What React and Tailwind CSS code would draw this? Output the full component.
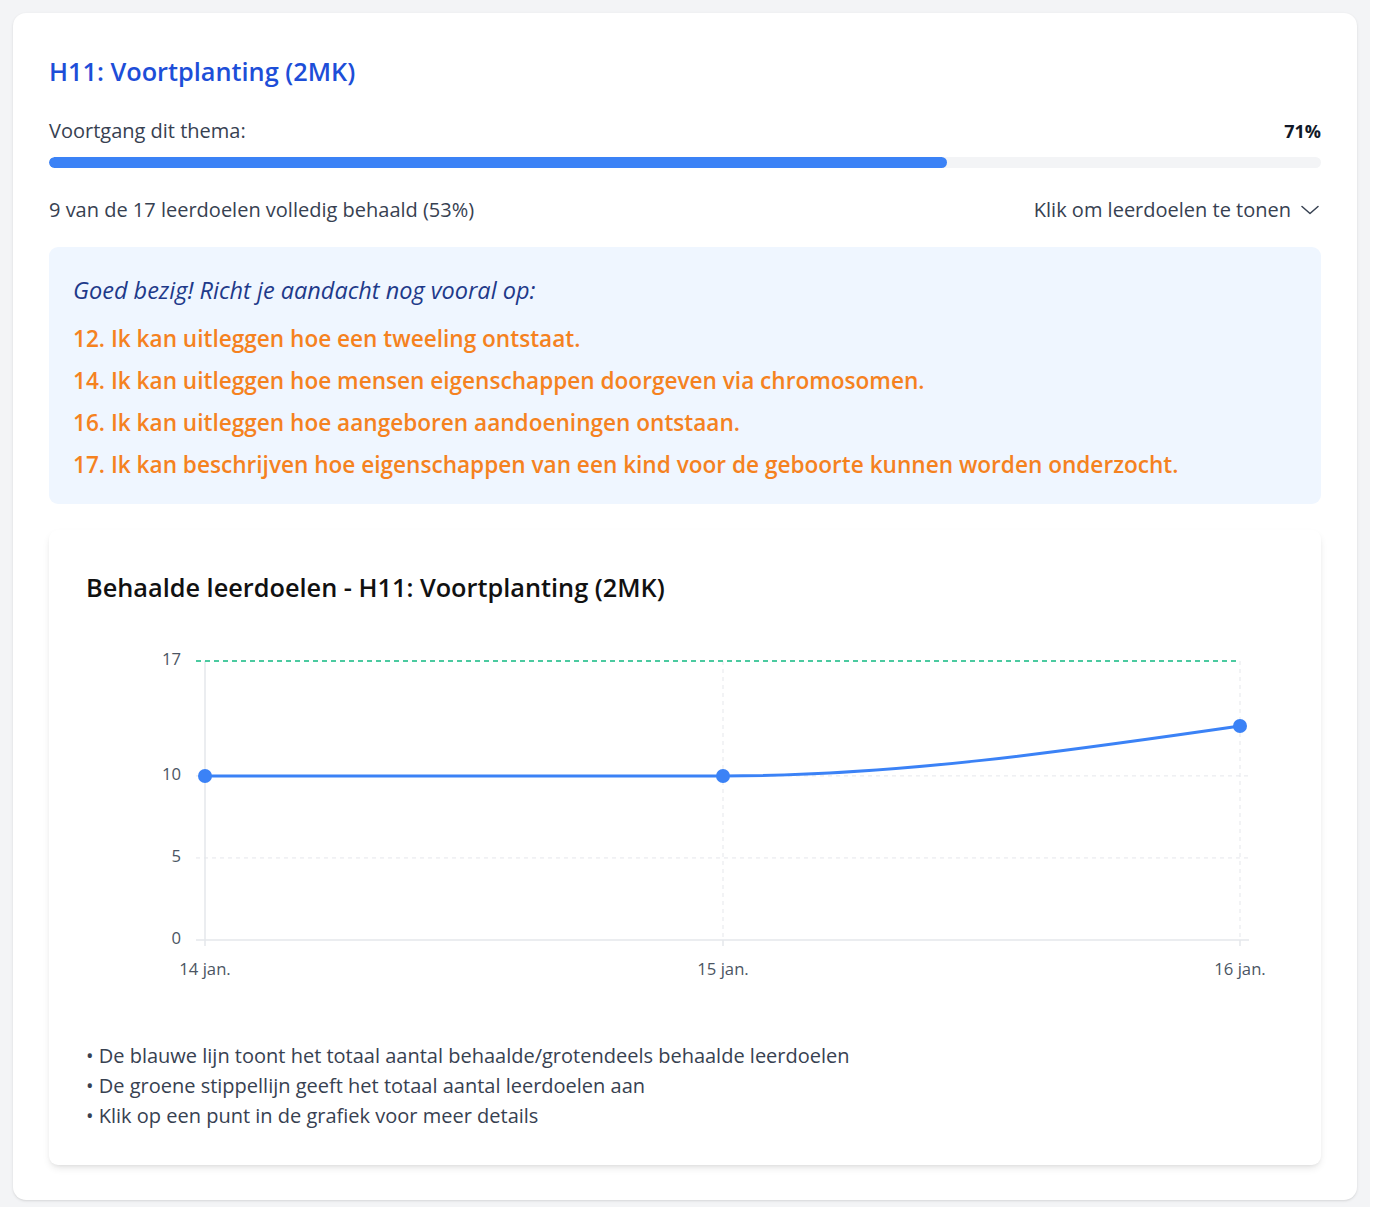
import React from "react";

const items = [
  "12. Ik kan uitleggen hoe een tweeling ontstaat.",
  "14. Ik kan uitleggen hoe mensen eigenschappen doorgeven via chromosomen.",
  "16. Ik kan uitleggen hoe aangeboren aandoeningen ontstaan.",
  "17. Ik kan beschrijven hoe eigenschappen van een kind voor de geboorte kunnen worden onderzocht.",
];

function Chart() {
  const yv = (v) => 295 - v * 16.41;
  const xs = [119, 637, 1154];
  return (
    <svg width="1198" height="350" viewBox="0 0 1198 350" className="block">
      {[5, 10].map((v) => (
        <line key={v} x1="110" x2="1163" y1={yv(v)} y2={yv(v)} stroke="#e5e7eb" strokeDasharray="4 4" strokeWidth="1" />
      ))}
      <line x1={xs[0]} x2={xs[0]} y1="16" y2="301" stroke="#e5e7eb" strokeWidth="1.5" />
      {[xs[1], xs[2]].map((x) => (
        <g key={x}>
          <line x1={x} x2={x} y1="16" y2="295" stroke="#e5e7eb" strokeDasharray="4 4" strokeWidth="1" />
          <line x1={x} x2={x} y1="295" y2="301" stroke="#e5e7eb" strokeWidth="1.5" />
        </g>
      ))}
      <line x1="110" x2="1163" y1="295" y2="295" stroke="#e5e7eb" strokeWidth="1.5" />
      <line x1="110" x2="1154" y1={yv(17)} y2={yv(17)} stroke="#10b981" strokeDasharray="5 4" strokeWidth="1.5" />
      {[0, 5, 10, 17].map((v) => (
        <text key={v} x="95" y={yv(v)} textAnchor="end" dominantBaseline="middle" fill="#4b5563" fontSize="16.7" fontFamily="'Open Sans', sans-serif">
          {v}
        </text>
      ))}
      {["14 jan.", "15 jan.", "16 jan."].map((t, i) => (
        <text key={t} x={xs[i]} y="326" textAnchor="middle" dominantBaseline="middle" fill="#4b5563" fontSize="16.7" fontFamily="'Open Sans', sans-serif">
          {t}
        </text>
      ))}
      <path d="M119,131 L637,131 C809.3,131 981.7,106 1154,81" fill="none" stroke="#3b82f6" strokeWidth="3" />
      <circle cx="119" cy="131" r="7" fill="#3b82f6" />
      <circle cx="637" cy="131" r="7" fill="#3b82f6" />
      <circle cx="1154" cy="81" r="7" fill="#3b82f6" />
    </svg>
  );
}

export default function App() {
  return (
    <div className="flex w-[1384px] min-h-[1207px] font-['Segoe_UI','Open_Sans',sans-serif]">
      <div className="w-[1370px] bg-[#f3f4f6] pt-[13px] pl-[13px] pb-[7px]">
        <div className="w-[1344px] bg-white rounded-[13px] shadow-sm px-[36px] pt-[36px] pb-[35px] flex flex-col">
          <div className="h-[46px] flex items-center text-[25.3px] font-semibold text-[#1d4ed8]">
            H11: Voortplanting (2MK)
          </div>
          <div className="mt-[23px] h-[26px] flex items-center justify-between text-[20px] text-[#374151]">
            <span>Voortgang dit thema:</span>
            <span className="font-bold text-[18px] text-[#111827]">71%</span>
          </div>
          <div className="mt-[13px] h-[11px] rounded-full bg-[#f3f4f6] overflow-hidden">
            <div className="h-full rounded-full bg-[#3b82f6]" style={{ width: "70.6%" }} />
          </div>
          <div className="mt-[29px] h-[26px] flex items-center justify-between text-[20px] text-[#374151]">
            <span>9 van de 17 leerdoelen volledig behaald (53%)</span>
            <span className="flex items-center gap-[10px]">
              Klik om leerdoelen te tonen
              <svg width="18" height="10" viewBox="0 0 18 10" className="mr-[2px]">
                <polyline points="1,1.5 9,8.5 17,1.5" fill="none" stroke="#374151" strokeWidth="1.5" strokeLinecap="round" strokeLinejoin="round" />
              </svg>
            </span>
          </div>
          <div className="mt-[24px] h-[257px] rounded-[9px] bg-[#eff6ff] px-[24px] pt-[26px] flex flex-col">
            <div className="h-[36px] flex items-center italic text-[23.5px] text-[#1e3a8a]">
              Goed bezig! Richt je aandacht nog vooral op:
            </div>
            <div className="mt-[9px] flex flex-col">
              {items.map((t) => (
                <div key={t} className="h-[42px] flex items-center text-[22.6px] font-semibold text-[#f5821f]">
                  {t}
                </div>
              ))}
            </div>
          </div>
          <div className="mt-[26px] h-[635px] rounded-[9px] bg-white shadow-[0_4px_8px_-2px_rgba(0,0,0,0.12),0_2px_4px_-2px_rgba(0,0,0,0.08)] px-[37px] pt-[36px] flex flex-col">
            <div className="h-[44px] flex items-center text-[25.3px] font-semibold text-[#111111]">
              Behaalde leerdoelen - H11: Voortplanting (2MK)
            </div>
            <div className="mt-[35px]">
              <Chart />
            </div>
            <div className="mt-[46px] flex flex-col text-[20px] text-[#374151]">
              <div className="h-[30px] flex items-center">• De blauwe lijn toont het totaal aantal behaalde/grotendeels behaalde leerdoelen</div>
              <div className="h-[30px] flex items-center">• De groene stippellijn geeft het totaal aantal leerdoelen aan</div>
              <div className="h-[30px] flex items-center">• Klik op een punt in de grafiek voor meer details</div>
            </div>
          </div>
        </div>
      </div>
      <div className="w-[14px] bg-white" />
    </div>
  );
}
